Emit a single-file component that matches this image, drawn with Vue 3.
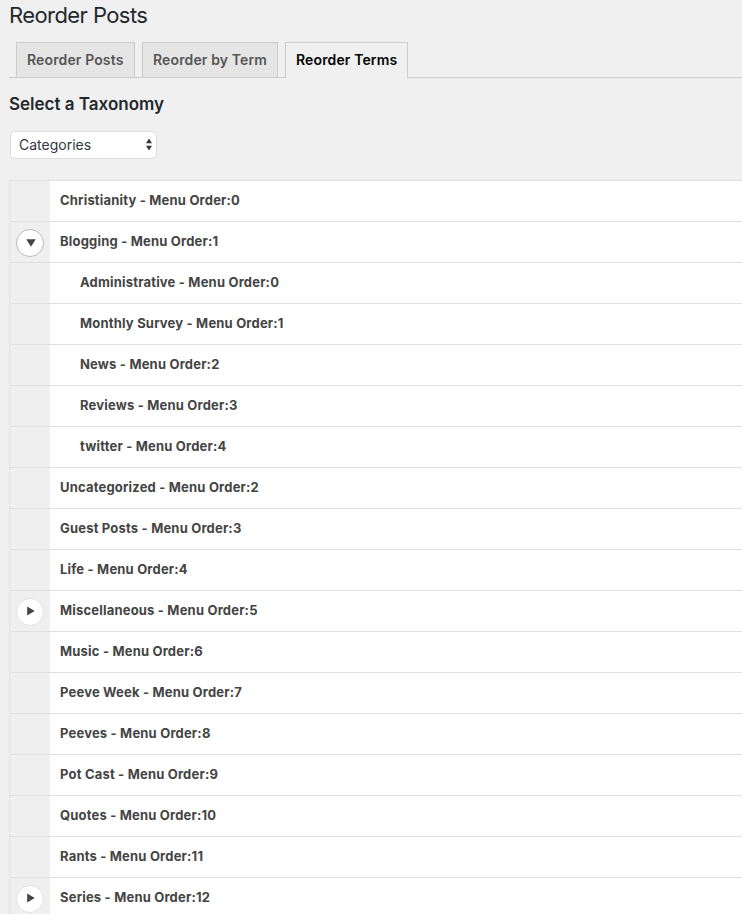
<script setup>
import { ref } from 'vue'

const tabs = ['Reorder Posts', 'Reorder by Term', 'Reorder Terms']
const active = ref(2)

const terms = [
  { name: 'Christianity', order: 0 },
  {
    name: 'Blogging', order: 1, toggle: 'open',
    children: ['Administrative', 'Monthly Survey', 'News', 'Reviews', 'twitter'],
  },
  { name: 'Uncategorized', order: 2 },
  { name: 'Guest Posts', order: 3 },
  { name: 'Life', order: 4 },
  { name: 'Miscellaneous', order: 5, toggle: 'closed' },
  { name: 'Music', order: 6 },
  { name: 'Peeve Week', order: 7 },
  { name: 'Peeves', order: 8 },
  { name: 'Pot Cast', order: 9 },
  { name: 'Quotes', order: 10 },
  { name: 'Rants', order: 11 },
  { name: 'Series', order: 12, toggle: 'closed' },
]

const rows = terms.flatMap((t) => [
  t,
  ...(t.children || []).map((name, order) => ({ name, order, child: true })),
])
</script>

<template>
  <main class="wrap">
    <h1>Reorder Posts</h1>
    <nav class="tabs">
      <a v-for="(tab, i) in tabs" :key="tab" class="tab" :class="{ active: i === active }" @click="active = i">{{ tab }}</a>
    </nav>
    <h3>Select a Taxonomy</h3>
    <div class="select">
      <span>Categories</span>
      <svg width="8" height="13" viewBox="0 0 8 13"><path d="M4 0.4 7 5.2H1ZM4 12.6 1 7.8H7Z" fill="#32373c" /></svg>
    </div>
    <ul class="list">
      <li v-for="row in rows" :key="row.name" class="row" :class="{ child: row.child }">
        <div class="handle">
          <button v-if="row.toggle" class="toggle" :class="row.toggle">
            <svg v-if="row.toggle === 'open'" width="10" height="8" viewBox="0 0 10 8"><path d="M0.3 0.2H9.7L5 7.8Z" fill="#444" /></svg>
            <svg v-else width="8" height="10" viewBox="0 0 8 10"><path d="M0.2 0.5 7.7 5 0.2 9.5Z" fill="#444" /></svg>
          </button>
        </div>
        <span class="label">{{ row.name }} - Menu Order:{{ row.order }}</span>
      </li>
    </ul>
  </main>
</template>

<style>
body { background: #f0f0f0; }
</style>

<style scoped>
.wrap {
  box-sizing: border-box;
  height: 914px;
  overflow: hidden;
  padding-left: 9px;
  background: #f0f0f0;
  color: #23282d;
  font-family: Inter, "Liberation Sans", sans-serif;
}
h1 {
  margin: 0;
  height: 42px;
  font-size: 22px;
  line-height: 30px;
  font-weight: 400;
  letter-spacing: -0.58px;
}
.tabs {
  display: flex;
  gap: 7px;
  height: 35px;
  padding-left: 7px;
  border-bottom: 1px solid #ccc;
}
.tab {
  box-sizing: border-box;
  height: 35px;
  width: 119px;
  padding-left: 10px;
  border: 1px solid #ccc;
  border-bottom: 0;
  background: #e5e5e5;
  color: #555;
  font-size: 14px;
  line-height: 34px;
  font-weight: 600;
  letter-spacing: 0.13px;
  white-space: nowrap;
}
.tab:nth-child(2) { width: 136px; }
.tab.active {
  width: 123px;
  height: 36px;
  background: #f0f0f0;
  color: #000;
}
h3 {
  margin: 15px 0 0;
  font-size: 17px;
  line-height: 22px;
  font-weight: 600;
}
.select {
  box-sizing: border-box;
  display: flex;
  align-items: center;
  justify-content: space-between;
  width: 147px;
  height: 28px;
  margin: 16px 0 0 1px;
  padding: 0 3px 1px 8px;
  border: 1px solid #ddd;
  border-radius: 5px;
  background: #fff;
  color: #32373c;
  font-size: 14px;
  line-height: 17px;
}
.list {
  margin: 21px 0 0;
  padding: 0;
  list-style: none;
  border-top: 1px solid #dfdfdf;
  border-left: 1px solid #e3e3e3;
}
.row {
  box-sizing: border-box;
  display: flex;
  height: 41px;
  border-bottom: 1px solid #dfdfdf;
  background: #fff;
}
.handle {
  box-sizing: border-box;
  flex: none;
  width: 40px;
  padding: 7px 0 0 6px;
  background: #efefef;
}
.toggle {
  box-sizing: border-box;
  display: flex;
  align-items: center;
  justify-content: center;
  width: 28px;
  height: 28px;
  padding: 0 0 0 1px;
  border: 1px solid #e2e2e2;
  border-radius: 50%;
  background: #fff;
}
.toggle.open { border-color: #bbb; padding-left: 2px; }
.toggle.closed { padding-bottom: 2px; }
.label {
  padding-left: 10px;
  color: #444;
  font-size: 13px;
  line-height: 39px;
  font-weight: 700;
  letter-spacing: 0.19px;
  white-space: nowrap;
}
.child .label { padding-left: 30px; }
</style>
